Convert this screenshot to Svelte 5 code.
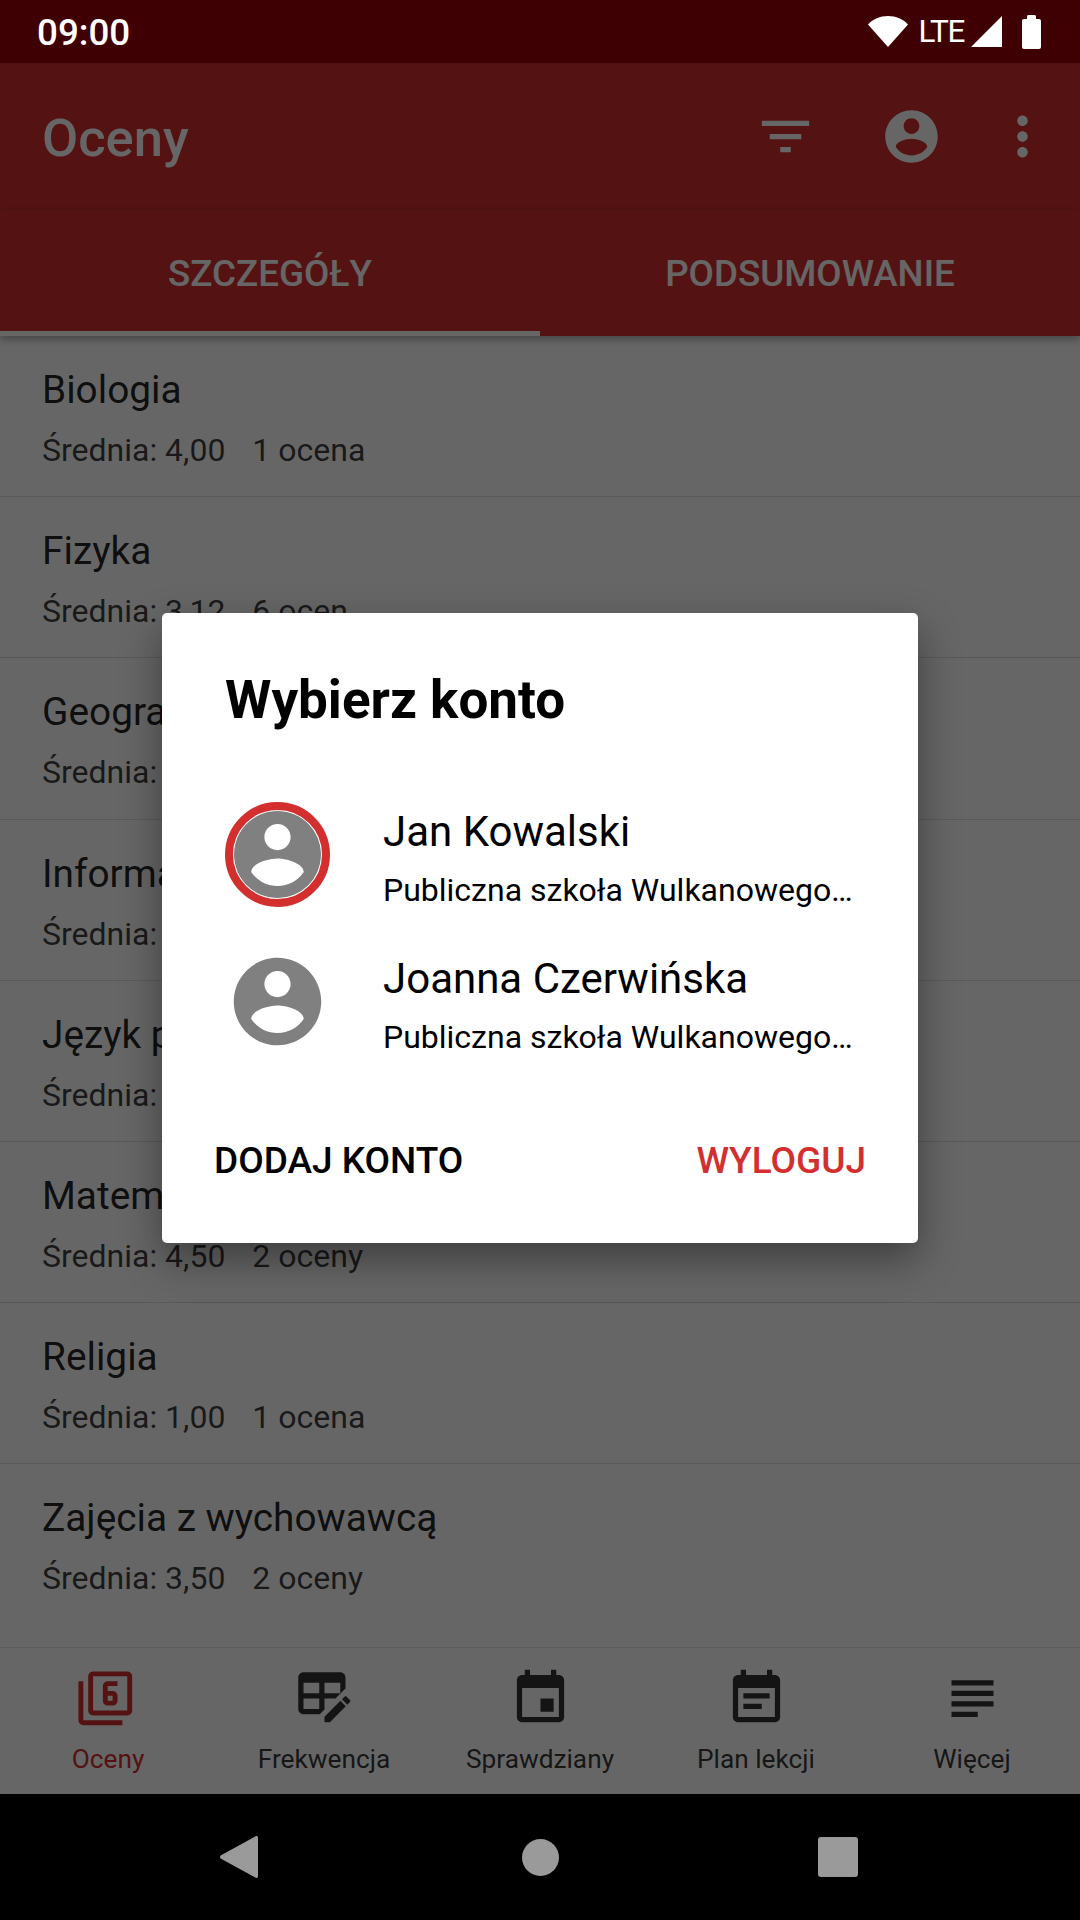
<script lang="ts">
  const iconAccount =
    "M12 2C6.48 2 2 6.48 2 12s4.48 10 10 10 10-4.48 10-10S17.52 2 12 2zm0 3c1.66 0 3 1.34 3 3s-1.34 3-3 3-3-1.34-3-3 1.34-3 3-3zm0 14.2c-2.5 0-4.71-1.28-6-3.22.03-1.99 4-3.08 6-3.08 1.99 0 5.97 1.09 6 3.08-1.29 1.94-3.5 3.22-6 3.22z";

  const subjects = [
    { name: "Biologia", average: "4,00", count: "1 ocena" },
    { name: "Fizyka", average: "3,12", count: "6 ocen" },
    { name: "Geografia", average: "3,00", count: "1 ocena" },
    { name: "Informatyka", average: "4,00", count: "2 oceny" },
    { name: "Język polski", average: "3,50", count: "4 oceny" },
    { name: "Matematyka", average: "4,50", count: "2 oceny" },
    { name: "Religia", average: "1,00", count: "1 ocena" },
    { name: "Zajęcia z wychowawcą", average: "3,50", count: "2 oceny" },
  ];

  const accounts = [
    { name: "Jan Kowalski", school: "Publiczna szkoła Wulkanowego…", active: true },
    { name: "Joanna Czerwińska", school: "Publiczna szkoła Wulkanowego…", active: false },
  ];

  const navItems = [
    {
      label: "Oceny",
      active: true,
      size: 58.6,
      path: "M3 5H1v16c0 1.1.9 2 2 2h16v-2H3V5zm18-4H7c-1.1 0-2 .9-2 2v14c0 1.1.9 2 2 2h14c1.1 0 2-.9 2-2V3c0-1.1-.9-2-2-2zm0 16H7V3h14v14zM13 5h4v2h-4v2h2c1.1 0 2 .9 2 2v2c0 1.1-.9 2-2 2h-2c-1.1 0-2-.9-2-2V7c0-1.1.9-2 2-2zm0 6v2h2v-2h-2z",
    },
    {
      label: "Frekwencja",
      size: 63,
      path: "M21.7 13.35l-1 1-2.05-2.05 1-1c.21-.21.56-.21.77 0l1.28 1.28c.21.21.21.56 0 .77zM12 18.94l6.06-6.06 2.05 2.05L14.06 21H12v-2.06zM4 2h14c1.1 0 2 .9 2 2v4.17L16.17 12H12v4.17L10.17 18H4c-1.1 0-2-.9-2-2V4c0-1.1.9-2 2-2zm0 4v4h6V6H4zm8 0v4h6V6h-6zm-8 6v4h6v-4H4z",
    },
    {
      label: "Sprawdziany",
      size: 63,
      path: "M17 12h-5v5h5v-5zM16 1v2H8V1H6v2H5c-1.11 0-1.99.9-1.99 2L3 19c0 1.1.89 2 2 2h14c1.1 0 2-.9 2-2V5c0-1.1-.9-2-2-2h-1V1h-2zm3 18H5V8h14v11z",
    },
    {
      label: "Plan lekcji",
      size: 63,
      path: "M17 10H7v2h10v-2zm2-7h-1V1h-2v2H8V1H6v2H5c-1.11 0-1.99.9-1.99 2L3 19c0 1.1.89 2 2 2h14c1.1 0 2-.9 2-2V5c0-1.1-.9-2-2-2zm0 16H5V8h14v11zm-5-5H7v2h7v-2z",
    },
    {
      label: "Więcej",
      size: 63,
      path: "M14 17H4v2h10v-2zm6-8H4v2h16V9zM4 15h16v-2H4v2zM4 5v2h16V5H4z",
    },
  ];
</script>

<div class="screen">
  <div class="status-bar">
    <span class="clock">09:00</span>
    <div class="status-icons">
      <svg class="wifi" width="40" height="31" viewBox="0 0 40 31">
        <path d="M0 8.5C5 3 12 0 20 0s15 3 20 8.5L20 31z" />
      </svg>
      <span class="lte">LTE</span>
      <svg class="signal" width="31" height="31" viewBox="0 0 31 31">
        <path d="M31 0v31H0z" />
      </svg>
      <svg class="battery" width="19" height="34" viewBox="0 0 19 34">
        <path d="M5 4V1.500C5 .7 5.700 0 6.500 0h6c.8 0 1.500.7 1.500 1.500V4h3c1.100 0 2 .9 2 2v26c0 1.100-.9 2-2 2H2c-1.100 0-2-.9-2-2V6c0-1.100.9-2 2-2z" />
      </svg>
    </div>
  </div>

  <div class="app">
    <header class="toolbar">
      <h1>Oceny</h1>
      <div class="actions">
        <svg class="action" viewBox="0 0 24 24"><path d="M10 18h4v-2h-4v2zM3 6v2h18V6H3zm3 7h12v-2H6v2z" /></svg>
        <svg class="action" viewBox="0 0 24 24"><path d={iconAccount} /></svg>
        <svg class="action overflow" viewBox="0 0 24 24">
          <path d="M12 8c1.100 0 2-.9 2-2s-.9-2-2-2-2 .9-2 2 .9 2 2 2zm0 2c-1.100 0-2 .9-2 2s.9 2 2 2 2-.9 2-2-.9-2-2-2zm0 6c-1.100 0-2 .9-2 2s.9 2 2 2 2-.9 2-2-.9-2-2-2z" />
        </svg>
      </div>
    </header>

    <nav class="tabs">
      <div class="tab selected">SZCZEGÓŁY</div>
      <div class="tab">PODSUMOWANIE</div>
    </nav>

    <main class="list">
      {#each subjects as subject}
        <div class="row">
          <div class="subject">{subject.name}</div>
          <div class="meta">
            <span class="average">Średnia: {subject.average}</span>
            <span>{subject.count}</span>
          </div>
        </div>
      {/each}
    </main>

    <footer class="bottom-nav">
      {#each navItems as item}
        <div class="nav-item" class:active={item.active}>
          <div class="nav-icon">
            <svg width={item.size} height={item.size} viewBox="0 0 24 24"><path d={item.path} /></svg>
          </div>
          <span>{item.label}</span>
        </div>
      {/each}
    </footer>

    <div class="scrim">
      <div class="dialog">
        <h2>Wybierz konto</h2>
        <div class="accounts">
          {#each accounts as account}
            <div class="account">
              <div class="avatar" class:current={account.active}>
                <svg width="105" height="105" viewBox="0 0 24 24"><path d={iconAccount} /></svg>
              </div>
              <div class="account-text">
                <div class="account-name">{account.name}</div>
                <div class="account-school">{account.school}</div>
              </div>
            </div>
          {/each}
        </div>
        <div class="buttons">
          <span>DODAJ KONTO</span>
          <span class="logout">WYLOGUJ</span>
        </div>
      </div>
    </div>
  </div>

  <div class="system-nav">
    <svg width="38" height="42" viewBox="0 0 36 42" preserveAspectRatio="none"><path d="M34.500 0c.8 0 1.500.7 1.500 1.500v39c0 .8-.7 1.500-1.500 1.500-.4 0-.8-.2-1.100-.5L.6 22.600c-.8-.9-.8-2.300 0-3.200L33.400.5c.3-.3.7-.5 1.100-.5z" /></svg>
    <svg class="home" width="37" height="37" viewBox="0 0 37 37"><circle cx="18.500" cy="18.500" r="18.500" /></svg>
    <svg class="recents" width="40" height="40" viewBox="0 0 40 40"><rect width="40" height="40" rx="3" /></svg>
  </div>
</div>

<style>
  :global(body) {
    margin: 0;
    background: #000;
  }

  .screen {
    width: 1080px;
    height: 1920px;
    display: flex;
    flex-direction: column;
    font-family: Roboto, "Noto Sans", sans-serif;
    overflow: hidden;
  }

  .status-bar {
    height: 63px;
    flex-shrink: 0;
    background: #3f0003;
    color: #fff;
    display: flex;
    justify-content: space-between;
    align-items: center;
    padding: 0 39px 0 37px;
    box-sizing: border-box;
  }

  .clock {
    font-size: 36.750px;
    font-weight: 500;
    padding-top: 2px;
  }

  .status-icons {
    display: flex;
    align-items: center;
  }

  .status-icons svg {
    fill: #fff;
    display: block;
  }

  .lte {
    font-size: 31.500px;
    letter-spacing: -1.300px;
    margin: 0 7px 0 10px;
  }

  .battery {
    margin-left: 20px;
  }

  .app {
    position: relative;
    flex: 1;
    display: flex;
    flex-direction: column;
    background: #fff;
    min-height: 0;
  }

  .toolbar {
    height: 147px;
    flex-shrink: 0;
    background: #d32f2f;
    color: #fff;
    display: flex;
    align-items: center;
    justify-content: space-between;
    padding-left: 42px;
  }

  h1 {
    margin: 0;
    font-size: 52.500px;
    font-weight: 500;
    padding-top: 3px;
  }

  .actions {
    display: flex;
    align-items: center;
    padding-right: 26px;
  }

  .action {
    width: 63px;
    height: 63px;
    fill: #fff;
    margin-left: 63px;
    display: block;
  }

  .overflow {
    margin-left: 48px;
  }

  .tabs {
    height: 126px;
    flex-shrink: 0;
    background: #d32f2f;
    display: flex;
    box-shadow: 0 3px 8px rgba(0, 0, 0, 0.35);
    position: relative;
  }

  .tab {
    flex: 1;
    display: flex;
    align-items: center;
    justify-content: center;
    font-size: 36.750px;
    font-weight: 500;
    color: #fff;
    box-sizing: border-box;
    border-bottom: 5px solid transparent;
    padding-top: 5px;
  }

  .tab.selected {
    border-bottom-color: #fff;
  }

  .list {
    flex: 1;
    min-height: 0;
  }

  .row {
    height: 161.200px;
    box-sizing: border-box;
    padding: 28px 42px 0;
    border-bottom: 1px solid #dedede;
    color: rgba(0, 0, 0, 0.87);
  }

  .row:last-child {
    border-bottom: none;
  }

  .subject {
    font-size: 38.800px;
    line-height: 52px;
  }

  .meta {
    margin-top: 13px;
    font-size: 32px;
    line-height: 42px;
    color: rgba(0, 0, 0, 0.76);
    display: flex;
  }

  .average {
    margin-right: 27px;
  }

  .bottom-nav {
    height: 147px;
    flex-shrink: 0;
    background: #fff;
    border-top: 1px solid #e8e8e8;
    display: flex;
    box-sizing: border-box;
  }

  .nav-item {
    flex: 1;
    display: flex;
    flex-direction: column;
    align-items: center;
    font-size: 26.250px;
    color: rgba(0, 0, 0, 0.8);
  }

  .nav-icon {
    height: 63px;
    margin-top: 19px;
    display: flex;
    align-items: center;
    justify-content: center;
  }

  .nav-icon svg {
    fill: rgba(0, 0, 0, 0.8);
    display: block;
  }

  .nav-item span {
    margin-top: 14px;
  }

  .nav-item.active {
    color: #d32f2f;
  }

  .nav-item.active svg {
    fill: #d32f2f;
    margin-right: 5px;
  }

  .scrim {
    position: absolute;
    inset: 0;
    background: rgba(0, 0, 0, 0.6);
  }

  .dialog {
    position: absolute;
    left: 162px;
    top: 550px;
    width: 756px;
    height: 630px;
    box-sizing: border-box;
    background: #fff;
    border-radius: 5px;
    box-shadow: 0 16px 40px rgba(0, 0, 0, 0.4);
    display: flex;
    flex-direction: column;
    padding: 57px 52px 0 63px;
  }

  h2 {
    margin: 0;
    font-size: 53px;
    font-weight: 700;
    line-height: 60px;
    color: #000;
  }

  .accounts {
    display: flex;
    flex-direction: column;
    margin-top: 72px;
    gap: 42px;
  }

  .account {
    display: flex;
    align-items: center;
    height: 105px;
  }

  .avatar {
    width: 105px;
    height: 105px;
    flex-shrink: 0;
    border-radius: 50%;
    position: relative;
  }

  .avatar svg {
    fill: #808080;
    display: block;
  }

  .avatar.current::after {
    content: "";
    position: absolute;
    inset: 0;
    border-radius: 50%;
    border: 8px solid #d32f2f;
    box-shadow: inset 0 0 0 1px rgba(255, 255, 255, 0.8);
  }

  .account-text {
    margin-left: 53px;
    padding-top: 5px;
    white-space: nowrap;
  }

  .account-name {
    font-size: 42px;
    line-height: 56px;
    color: #000;
  }

  .account-school {
    font-size: 32px;
    line-height: 42px;
    margin-top: 9px;
    color: #000;
  }

  .buttons {
    margin: 85px 0 0 -11px;
    display: flex;
    justify-content: space-between;
    font-size: 37px;
    font-weight: 500;
    color: #000;
  }

  .logout {
    color: #d32f2f;
  }

  .system-nav {
    height: 126px;
    flex-shrink: 0;
    background: #000;
    display: flex;
    align-items: center;
    padding-left: 220px;
    box-sizing: border-box;
  }

  .system-nav svg {
    fill: #9a9a9a;
    display: block;
  }

  .home {
    margin-left: 264px;
  }

  .recents {
    margin-left: 259px;
  }
</style>
